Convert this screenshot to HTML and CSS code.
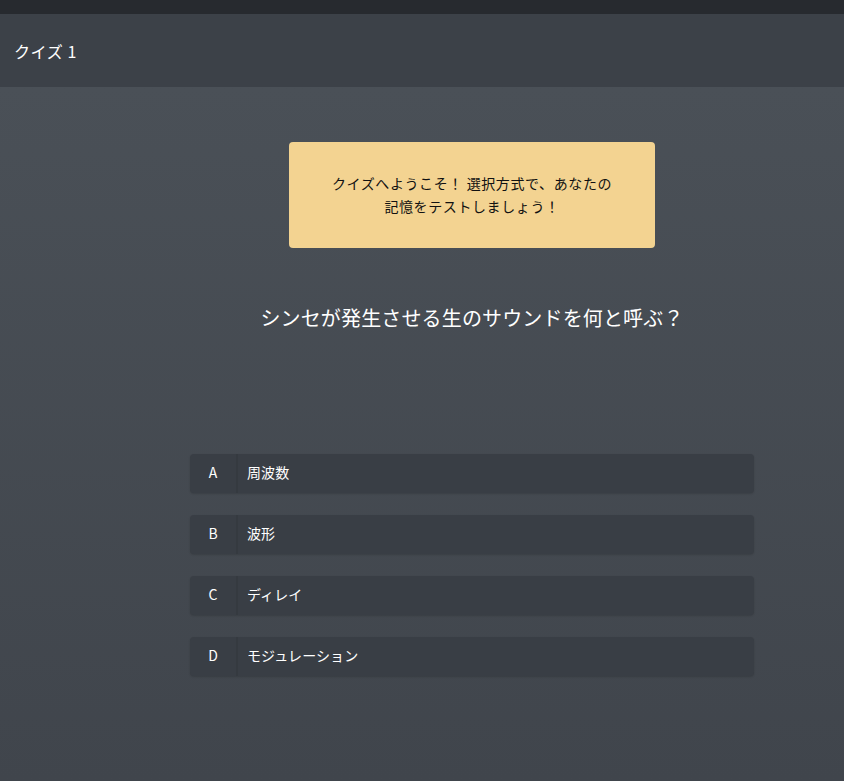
FILE: index.html
```html
<!DOCTYPE html>
<html lang="ja">
<head>
    <meta charset="UTF-8">
    <meta name="viewport" content="width=device-width, initial-scale=1.0">
    <title>クイズ 1</title>
    <link rel="stylesheet" href="styles.css">
</head>
<body>
    <div class="topbar"></div>
    <header class="header">
        <h1>クイズ 1</h1>
    </header>

    <main class="main">
        <div class="quiz">
            <div class="notice">
                クイズへようこそ！ 選択方式で、あなたの<br>
                記憶をテストしましょう！
            </div>

            <h2 class="question">シンセが発生させる生のサウンドを何と呼ぶ？</h2>

            <ul class="answers">
                <li class="answer"><span class="letter">A</span><span class="label">周波数</span></li>
                <li class="answer"><span class="letter">B</span><span class="label">波形</span></li>
                <li class="answer"><span class="letter">C</span><span class="label">ディレイ</span></li>
                <li class="answer"><span class="letter">D</span><span class="label">モジュレーション</span></li>
            </ul>
        </div>
    </main>
</body>
</html>
```

FILE: styles.css
```css
html, body {
    height: 100%;
}
body {
    margin: 0;
    font-family: "Noto Sans CJK JP", "Noto Sans", sans-serif;
    color: #fff;
    background: #43484f;
    display: flex;
    flex-direction: column;
    box-sizing: border-box;
}
*, *:before, *:after {
    box-sizing: inherit;
}
.topbar {
    height: 14px;
    background: #272a2f;
    flex: none;
}
.header {
    height: 73px;
    background: #3c4148;
    display: flex;
    align-items: center;
    padding: 0 14px;
    flex: none;
}
.header h1 {
    margin: 0;
    font-size: 16px;
    font-weight: normal;
    letter-spacing: 0.6px;
}
.main {
    flex: 1;
    background: linear-gradient(#4a5057, #40454c);
    padding: 55px 0 0 190px;
}
.quiz {
    width: 564px;
    display: flex;
    flex-direction: column;
    align-items: center;
}
.notice {
    width: 366px;
    height: 106px;
    background: #f3d391;
    color: #111;
    border-radius: 4px;
    font-size: 14px;
    line-height: 23px;
    text-align: center;
    display: flex;
    align-items: center;
    justify-content: center;
    letter-spacing: 0.6px;
}
.question {
    margin: 54px 0 0;
    font-size: 20px;
    font-weight: normal;
    line-height: 32px;
    letter-spacing: 0.15px;
}
.answers {
    list-style: none;
    margin: 120px 0 0;
    padding: 0;
    width: 100%;
    display: flex;
    flex-direction: column;
    gap: 22px;
}
.answer {
    height: 39px;
    background: #393e45;
    border-radius: 4px;
    display: flex;
    align-items: center;
    font-size: 14px;
    box-shadow: 0 1px 2px rgba(0, 0, 0, 0.15);
}
.letter {
    width: 48px;
    height: 100%;
    display: flex;
    align-items: center;
    justify-content: center;
    padding-bottom: 3px;
    border-right: 2px solid #353a40;
}
.label {
    padding: 0 0 3px 9px;
    letter-spacing: 0.1px;
}
```
